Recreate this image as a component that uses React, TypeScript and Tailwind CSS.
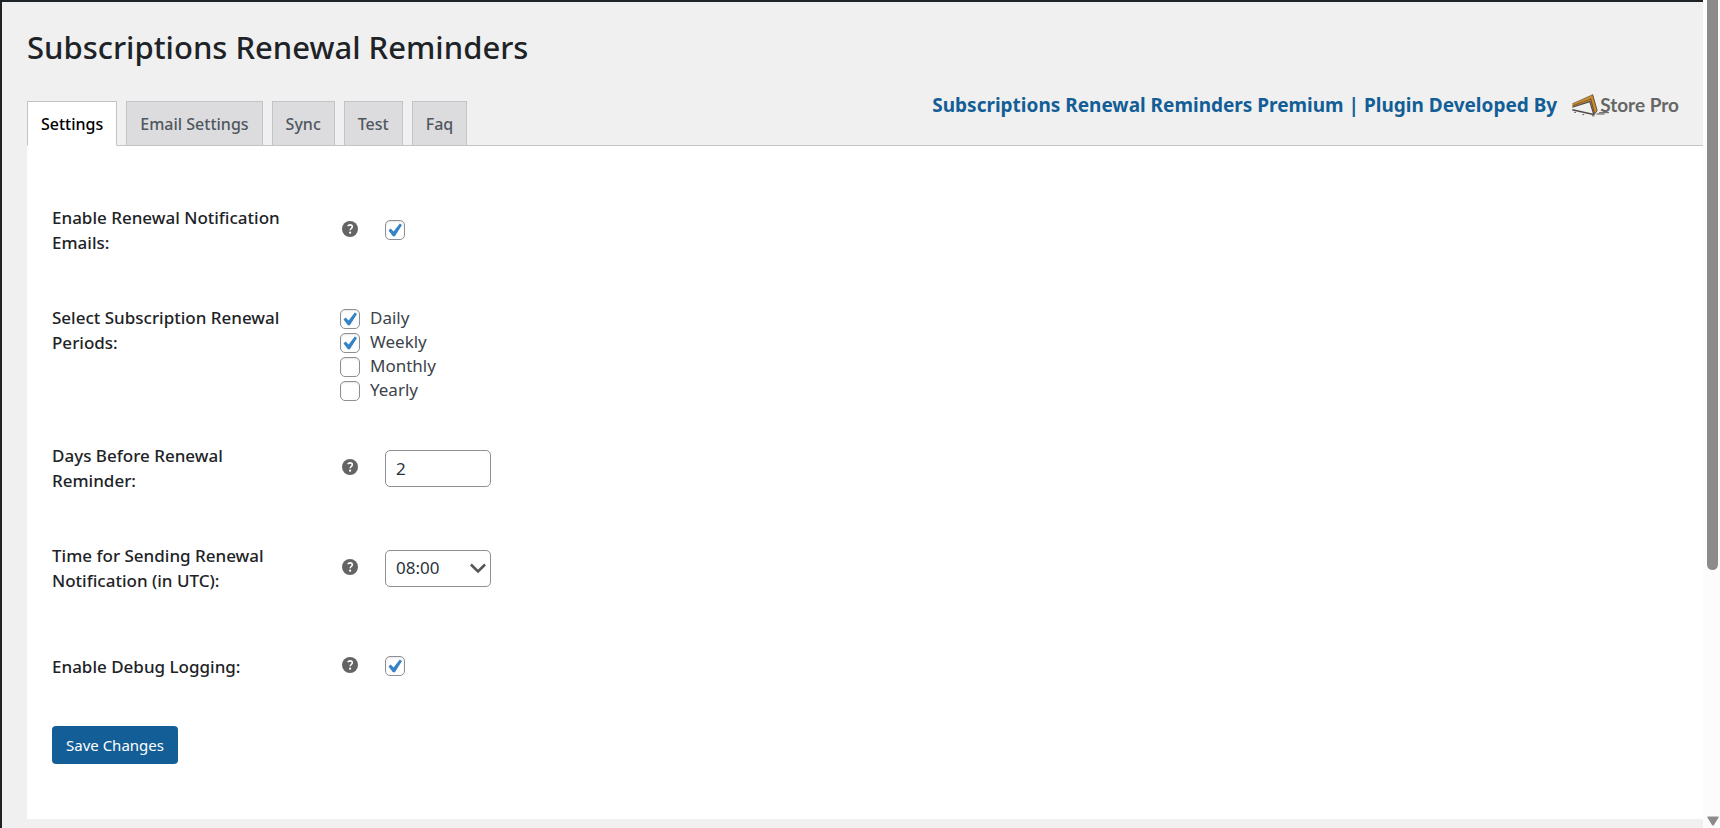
import { useState, type ReactNode } from "react";

const TABS = ["Settings", "Email Settings", "Sync", "Test", "Faq"];
const PERIODS = [
  { id: "daily", label: "Daily", on: true },
  { id: "weekly", label: "Weekly", on: true },
  { id: "monthly", label: "Monthly", on: false },
  { id: "yearly", label: "Yearly", on: false },
];
const HOURS = Array.from({ length: 24 }, (_, h) => `${String(h).padStart(2, "0")}:00`);

function CheckBox({ id, on }: { id: string; on: boolean }) {
  return (
    <span className="grid size-5 shrink-0">
      <input
        id={id}
        type="checkbox"
        defaultChecked={on}
        className="peer col-start-1 row-start-1 size-5 appearance-none rounded-[5px] border border-[#8c8f94] bg-white shadow-[inset_0_1px_2px_rgba(0,0,0,0.1)]"
      />
      <svg
        viewBox="0 0 20 20"
        className="pointer-events-none invisible col-start-1 row-start-1 size-5 fill-[#3582c4] peer-checked:visible"
        aria-hidden="true"
      >
        <path d="M14.8 3.6l2.200 1.300L9.900 16.200H7.900L3.500 10.400l2.100-1.800 3 2.900z" />
      </svg>
    </span>
  );
}

function HelpTip() {
  return (
    <svg viewBox="0 0 16 16" className="size-4 shrink-0" aria-hidden="true">
      <circle cx="8" cy="8" r="8" fill="#646464" />
      <path
        d="M5.7 5.1C6.3 4.2 7.2 3.9 8 3.9c1.4 0 2.3.8 2.3 1.9 0 1.7-2.1 1.7-2.1 3.4"
        fill="none"
        stroke="#fff"
        strokeWidth="1.6"
      />
      <circle cx="8.1" cy="11.7" r="1.1" fill="#fff" />
    </svg>
  );
}

function Row({ label, htmlFor, children }: { label: string; htmlFor: string; children: ReactNode }) {
  return (
    <div className="flex min-h-24 items-center py-[25px]">
      <label htmlFor={htmlFor} className="mr-[38px] w-[250px] shrink-0 leading-[25px] font-medium text-[#1d2327]">
        {label}
      </label>
      <div className="flex items-center">
        <span className="flex w-[45px] shrink-0 pb-0.5 pl-0.5">
          <HelpTip />
        </span>
        {children}
      </div>
    </div>
  );
}

function StoreLogo() {
  return (
    <svg viewBox="0 0 38 24" className="h-6 w-[38px]" aria-hidden="true">
      <path d="M.3 11 16.500 3.800 20.800 1.500 25.200 17.500 21.700 21.800 18.300 8.300.3 14z" fill="#cf8c2c" />
      <path d="M.3 10.800 20.500 1.800M1 12.600 19 6" fill="none" stroke="#5b4a35" strokeWidth=".7" />
      <path d="M.3 14.300 17.800 8.600 21.700 21.400" fill="none" stroke="#4d4d4d" strokeWidth="1.200" />
      <path d="M20.600 1.600 25.200 17.600 21.900 22M18.600 5.500 22.600 20.500" fill="none" stroke="#55483a" strokeWidth=".9" />
      <path d="M.3 16.800 21.700 21.400" stroke="#4d4d4d" strokeWidth="1.500" />
      <path d="M2.200 19.300h1.800M10.500 21.600h1.600M20 22.800h2.500M24.500 21h8M27 19.700h10" stroke="#555" strokeWidth="1" />
    </svg>
  );
}

export default function App() {
  const [tab, setTab] = useState("Settings");
  return (
    <div className="flex min-h-screen bg-[#f0f0f0] font-['Noto_Sans','Open_Sans',sans-serif] text-[17px] leading-6 text-[#3c434a]">
      <div className="flex min-w-0 grow flex-col border-t-2 border-l-2 border-[#1d2327] pb-[9px]">
        <h1 className="pt-[23px] pl-[25px] text-[31px] leading-[44px] font-medium text-[#1d2327]">
          Subscriptions Renewal Reminders
        </h1>
        <header className="ml-[25px] flex items-end justify-between border-b border-[#c3c4c7] pt-6">
          <nav className="-mb-px flex gap-[9px] text-base">
            {TABS.map((name) => (
              <button
                key={name}
                type="button"
                onClick={() => setTab(name)}
                className={
                  name === tab
                    ? "h-[45px] border border-[#c3c4c7] border-b-white bg-white px-[13px] font-medium text-black"
                    : "h-[45px] border border-[#c3c4c7] bg-[#dcdcde] px-[13px] font-medium text-[#50575e]"
                }
              >
                {name}
              </button>
            ))}
          </nav>
          <div className="mr-6 mb-7 flex items-center gap-[15px] text-[19px] leading-6 font-bold text-[#135e96]">
            <a href="#premium">Subscriptions Renewal Reminders Premium | Plugin Developed By</a>
            <a href="#storepro" className="flex items-center font-['Lato','Open_Sans',sans-serif] text-[#666]">
              <StoreLogo />
              <span className="-ml-2.5">Store Pro</span>
            </a>
          </div>
        </header>

        <form className="ml-[25px] grow bg-white pt-[34px] pb-11 pl-[25px]" onSubmit={(e) => e.preventDefault()}>
          <Row label="Enable Renewal Notification Emails:" htmlFor="enable">
            <CheckBox id="enable" on />
          </Row>

          <fieldset className="flex items-start pt-[25px] pb-[15px]">
            <legend className="float-left mr-[38px] w-[250px] shrink-0 leading-[25px] font-medium text-[#1d2327]">
              Select Subscription Renewal Periods:
            </legend>
            <div className="flex flex-col pt-0.5">
              {PERIODS.map((p) => (
                <label key={p.id} htmlFor={p.id} className="flex h-6 items-center gap-2.5">
                  <CheckBox id={p.id} on={p.on} />
                  <span className="pb-0.5">{p.label}</span>
                </label>
              ))}
            </div>
          </fieldset>

          <Row label="Days Before Renewal Reminder:" htmlFor="days">
            <input
              id="days"
              type="text"
              inputMode="numeric"
              defaultValue="2"
              className="h-[37px] w-[106px] rounded-[5px] border border-[#8c8f94] bg-white px-2.5 text-[#2c3338]"
            />
          </Row>

          <Row label="Time for Sending Renewal Notification (in UTC):" htmlFor="time">
            <span className="grid items-center">
              <select
                id="time"
                defaultValue="08:00"
                className="col-start-1 row-start-1 h-[37px] w-[106px] appearance-none rounded-[5px] border border-[#8c8f94] bg-white px-2.5 text-[#2c3338]"
              >
                {HOURS.map((h) => (
                  <option key={h}>{h}</option>
                ))}
              </select>
              <svg
                viewBox="0 0 16 11"
                className="pointer-events-none col-start-1 row-start-1 mr-[5px] h-[11px] w-4 justify-self-end"
                aria-hidden="true"
              >
                <path d="M.9 1.500 8 8.500 15.100 1.500" fill="none" stroke="#555" strokeWidth="2.500" />
              </svg>
            </span>
          </Row>

          <Row label="Enable Debug Logging:" htmlFor="debug">
            <CheckBox id="debug" on />
          </Row>

          <button type="submit" className="mt-3 h-[38px] rounded-[4px] bg-[#135e96] px-3.5 text-[15px] text-white">
            Save Changes
          </button>
        </form>
      </div>

      <div
        className="sticky top-0 flex h-screen w-[17px] shrink-0 flex-col items-center justify-between bg-[#fcfcfc] pb-0.5 pl-0.5"
        aria-hidden="true"
      >
        <div className="h-[69%] w-[11px] rounded-b-full bg-[#8b8b8b]" />
        <svg viewBox="0 0 12 10" className="h-2.5 w-3">
          <path d="M1 .5h10q1 0 .6 1L7 9q-1 1.200-2 0L.4 1.500Q0 .5 1 .5z" fill="#8b8b8b" />
        </svg>
      </div>
    </div>
  );
}
